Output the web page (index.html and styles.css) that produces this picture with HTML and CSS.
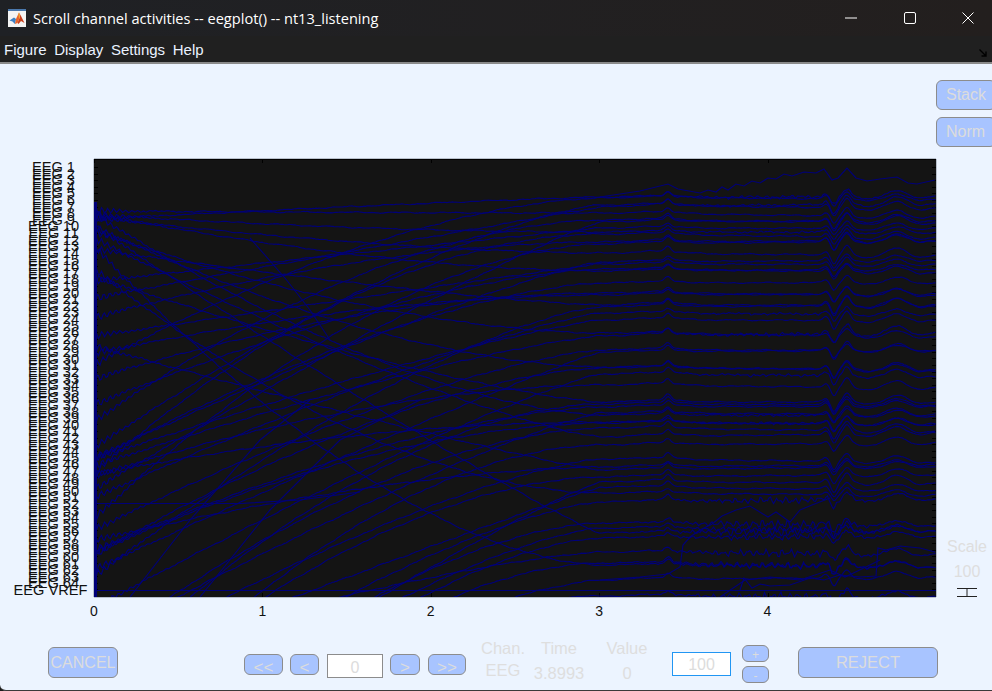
FILE: index.html
```html
<!DOCTYPE html>
<html lang="en">
<head>
    <meta charset="UTF-8">
    <title>Scroll channel activities -- eegplot() -- nt13_listening</title>
    <link rel="stylesheet" href="styles.css">
</head>
<body>
    <div class="window">
        <div class="titlebar">
            <svg class="app-icon" viewBox="0 0 18 18">
                <rect width="18" height="18" fill="#f4f4f4"/>
                <rect width="18" height="2" fill="#4a78ad"/>
                <path d="M1.5 11.5L6 8.5L8 10L7 15L4.5 12.5Z" fill="#3b7fc4"/>
                <path d="M8 10L11 3.5L12 8L9.5 14L7 15Z" fill="#e8642a"/>
                <path d="M11 3.5L13 7L16.5 14L13 12L10.5 15L9.5 14L12 8Z" fill="#c8401e"/>
                <path d="M10.5 4.5L11 3.5L12 8L11 9.5Z" fill="#f2b632"/>
            </svg>
            <span class="title">Scroll channel activities -- eegplot() -- nt13_listening</span>
            <div class="win-controls">
                <svg viewBox="0 0 12 12"><path d="M0 6H12" stroke="#fff" fill="none"/></svg>
                <svg viewBox="0 0 12 12"><rect x="0.5" y="0.5" width="11" height="11" rx="1.5" stroke="#fff" fill="none"/></svg>
                <svg viewBox="0 0 12 12"><path d="M0.5 0.5L11.5 11.5M11.5 0.5L0.5 11.5" stroke="#fff" fill="none"/></svg>
            </div>
        </div>
        <div class="menubar">
            <span>Figure</span>
            <span>Display</span>
            <span>Settings</span>
            <span>Help</span>
            <svg class="dock-arrow" viewBox="0 0 8 8"><path d="M0.5 0.5L6.5 6.5M7 2.5V7H2.5" stroke="#000" stroke-width="1.4" fill="none"/></svg>
        </div>
        <div class="figure">
            <div class="side-buttons">
                <button class="btn side-btn">Stack</button>
                <button class="btn side-btn">Norm</button>
            </div>
            <div class="plot-row">
                <div class="channels" id="channels"></div>
                <div class="plot">
                    <svg id="traces" width="842" height="438" viewBox="94 159 842 438"></svg>
                </div>
                <div class="scale">
                    <span>Scale</span>
                    <span>100</span>
                    <svg class="scale-bar" viewBox="0 0 20 9"><path d="M0 0.5H20M0 8.5H20M10 0.5V8.5" stroke="#222" fill="none"/></svg>
                </div>
            </div>
            <div class="ticks">
                <span>0</span>
                <span>1</span>
                <span>2</span>
                <span>3</span>
                <span>4</span>
            </div>
            <div class="controls">
                <button class="btn cancel">CANCEL</button>
                <div class="nav">
                    <button class="btn nav-btn prev-fast">&lt;&lt;</button>
                    <button class="btn nav-btn prev-one">&lt;</button>
                    <div class="field pos-field">0</div>
                    <button class="btn nav-btn next-one">&gt;</button>
                    <button class="btn nav-btn next-fast">&gt;&gt;</button>
                </div>
                <div class="readout">
                    <div class="read-col chan"><span>Chan.</span><span>EEG</span></div>
                    <div class="read-col time"><span>Time</span><span class="low">3.8993</span></div>
                    <div class="read-col value"><span>Value</span><span class="low">0</span></div>
                </div>
                <div class="field scale-field">100</div>
                <div class="stepper">
                    <button class="btn step-btn">+</button>
                    <button class="btn step-btn">-</button>
                </div>
                <button class="btn reject">REJECT</button>
            </div>
        </div>
    </div>
    <script src="script.js"></script>
</body>
</html>
```

FILE: styles.css
```css
body {
    margin: 0;
    background: #1c1c1c;
    font-family: "Liberation Sans", Arial, sans-serif;
}
.window {
    width: 992px;
    height: 691px;
    overflow: hidden;
    display: flex;
    flex-direction: column;
    background: #ecf4ff;
    border-bottom: 1px solid #3a3a3a;
    border-bottom-left-radius: 6px;
    box-sizing: border-box;
}
.titlebar {
    height: 36px;
    flex: none;
    display: flex;
    align-items: center;
    background: linear-gradient(90deg, #1f2125, #231f1e);
    color: #fff;
}
.app-icon {
    width: 18px;
    height: 18px;
    margin-left: 8px;
}
.title {
    margin-left: 7px;
    font-family: "Open Sans", sans-serif;
    font-size: 14.6px;
}
.win-controls {
    margin-left: auto;
    display: flex;
    gap: 46.5px;
    margin-right: 18px;
}
.win-controls svg {
    width: 12px;
    height: 12px;
}
.menubar {
    height: 26px;
    flex: none;
    display: flex;
    align-items: center;
    gap: 7.6px;
    padding: 0 5px 0 4px;
    background: #202020;
    color: #eaf2ff;
    font-size: 15px;
    border-bottom: 2px solid #8a8a8a;
}
.dock-arrow {
    width: 8px;
    height: 8px;
    margin: 8px 0 0 auto;
}
.figure {
    flex: 1;
    display: flex;
    flex-direction: column;
}
.btn {
    padding: 0;
    background: #a8c4ff;
    border: 1px solid #8c8c8c;
    border-radius: 6px;
    color: #dcdcdc;
    font-family: inherit;
    font-size: 16px;
    box-sizing: border-box;
}
.side-buttons {
    display: flex;
    flex-direction: column;
    gap: 7px;
    padding: 16px 0 0 936px;
}
.side-btn {
    width: 60px;
    height: 30px;
    text-align: left;
    padding-left: 9px;
}
.plot-row {
    display: flex;
    margin-top: 12px;
    height: 438px;
}
.channels {
    width: 94px;
    flex: none;
    color: #111;
    font-size: 14.6px;
    padding-top: 5px;
    box-sizing: border-box;
}
.channels div {
    height: 6.62px;
    line-height: 6.62px;
    width: 107px;
    text-align: center;
    white-space: nowrap;
}
.channels .vref {
    width: 101px;
}
.plot {
    width: 842px;
    flex: none;
    background: #141414;
    box-shadow: 0 -1px 0 #b8c0cc, 1px 0 0 #b8c0cc, -1px 0 0 #b8c0cc, 0 1px 0 #b8c0cc;
}
#traces {
    display: block;
}
.scale {
    flex: 1;
    display: flex;
    flex-direction: column;
    align-items: center;
    justify-content: flex-end;
    color: #dedede;
    font-size: 16px;
    padding-left: 6px;
}
.scale span {
    line-height: 25px;
}
.scale-bar {
    width: 20px;
    height: 9px;
    margin-top: 4px;
    flex: none;
}
.ticks {
    display: flex;
    padding: 6px 0 0 94px;
    height: 16px;
    color: #111;
    font-size: 14px;
    line-height: 16px;
}
.ticks span {
    width: 168.4px;
    flex: none;
    margin-left: -4px;
    margin-right: 4px;
}
.controls {
    display: flex;
    align-items: flex-start;
    padding: 0 0 0 48px;
    margin-top: 28px;
}
.cancel {
    width: 70px;
    height: 31px;
}
.nav {
    display: flex;
    align-items: flex-start;
    gap: 7px;
    margin: 7px 0 0 126px;
}
.nav-btn {
    height: 21px;
    font-size: 17px;
    line-height: 21px;
    padding-top: 2px;
}
.prev-fast {
    width: 39px;
}
.prev-one {
    width: 29px;
    margin-right: 1px;
}
.next-one {
    width: 30px;
    margin-right: 1px;
}
.next-fast {
    width: 38px;
}
.field {
    background: #fff;
    border: 1px solid #8c8c8c;
    box-sizing: border-box;
    color: #dcdcdc;
    font-size: 16px;
    text-align: center;
}
.pos-field {
    width: 56px;
    height: 24px;
    line-height: 25px;
}
.readout {
    display: flex;
    color: #dedede;
    font-size: 16.5px;
    margin-left: 15px;
}
.read-col {
    display: flex;
    flex-direction: column;
    align-items: center;
    text-align: center;
    line-height: 22px;
    margin-top: -10px;
}
.read-col .low {
    margin-top: 3px;
}
.chan {
    width: 44px;
}
.time {
    width: 60px;
    margin-left: 4px;
}
.value {
    width: 60px;
    margin-left: 8px;
}
.scale-field {
    width: 59px;
    height: 24px;
    line-height: 24px;
    margin: 5px 0 0 15px;
    border-color: #2196f3;
}
.stepper {
    display: flex;
    flex-direction: column;
    gap: 4px;
    margin: -2px 0 0 11px;
}
.step-btn {
    width: 27px;
    height: 17px;
    font-size: 12px;
    line-height: 15px;
    padding-top: 2px;
}
.reject {
    width: 140px;
    height: 31px;
    margin-left: 29px;
    font-size: 16.5px;
}
```

FILE: script.js
```js
// channel labels
var labelBox = document.getElementById('channels');
for (var n = 1; n <= 65; n++) {
    var lab = document.createElement('div');
    lab.textContent = n === 65 ? 'EEG VREF' : 'EEG ' + n;
    if (n === 65) lab.className = 'vref';
    labelBox.appendChild(lab);
}

// seeded random so the picture is the same on each load
var seed = 1337;
function rnd() {
    seed = (seed + 0x6D2B79F5) | 0;
    var t = Math.imul(seed ^ (seed >>> 15), 1 | seed);
    t = (t + Math.imul(t ^ (t >>> 7), 61 | t)) ^ t;
    return ((t ^ (t >>> 14)) >>> 0) / 4294967296;
}

function bump(x, c, w) {
    return Math.exp(-Math.pow((x - c) / w, 2));
}

// shape shared by all channels, in px, negative is up
function common(x) {
    return -4.5 * bump(x, 668, 4)
        - 2 * bump(x, 660, 30)
        - 3 * bump(x, 826, 4)
        + 8 * bump(x, 834, 4)
        - 8 * bump(x, 847, 5)
        + 2 * bump(x, 868, 10)
        - 6 * bump(x, 897, 12)
        + 1.5 * bump(x, 920, 8);
}

// level of each channel at x = 600
var levels = [197, 198, 205, 207, 213, 220, 222, 228, 232, 234, 242, 244, 253, 262, 264, 269, 271,
    283, 293, 295, 305, 307, 313, 320, 333, 336, 350, 352, 367, 368, 374, 385, 402, 404, 407,
    413, 415, 422, 423, 428, 437, 445, 459, 467, 470, 477, 482, 487, 493, 502, 523, 528, 533,
    538, 552, 563, 565, 580, 596];

var svg = document.getElementById('traces');
function addPath(d, width) {
    var p = document.createElementNS('http://www.w3.org/2000/svg', 'path');
    p.setAttribute('d', d);
    p.setAttribute('fill', 'none');
    p.setAttribute('stroke', '#000078');
    p.setAttribute('stroke-width', width || '1.15');
    svg.appendChild(p);
}

function addTick(x1, y1, x2, y2) {
    var p = document.createElementNS('http://www.w3.org/2000/svg', 'path');
    p.setAttribute('d', 'M' + x1 + ' ' + y1 + 'L' + x2 + ' ' + y2);
    p.setAttribute('stroke', '#000');
    svg.appendChild(p);
}

// axis ticks
for (var c = 0; c < 65; c++) {
    var ty = Math.round(167 + c * 6.6) + 0.5;
    addTick(94, ty, 98, ty);
    addTick(932, ty, 936, ty);
}
for (var k = 0; k < 5; k++) {
    var tx = Math.round(94 + k * 168.4) + 0.5;
    addTick(tx, 159, tx, 163);
    addTick(tx, 593, tx, 597);
}
addTick(94, 159.5, 936, 159.5);

levels.forEach(function (level, i) {
    var start;
    if (i === 0) start = 219;
    else if (i % 4 === 0) start = 210 + rnd() * (level - 210) * 0.55;
    else start = level + 50 + rnd() * 260;
    start = Math.max(start, 208);

    var power = 1 + rnd() * 0.9;
    var amp = (level < 500 ? 0.85 : 0.65) + rnd() * 0.4;
    var drift = -4 + rnd() * 8;
    var phase = rnd() * 6.28;
    var noisy = 0;
    if (level > 495) noisy = rnd() < 0.7 ? 2 + rnd() * 2 : 0;
    else if (rnd() < 0.2) noisy = 0.7 + rnd();
    var d = '';
    for (var x = 94; x <= 936; x += 1.5) {
        var t = Math.min((x - 94) / 506, 1);
        var y = level + (start - level) * Math.pow(1 - t, power);
        if (x > 600) y += drift * (x - 600) / 336;
        y += amp * common(x);
        y += 4 * Math.sin((x - 94) * 1.05 + phase) * Math.exp(-(x - 94) / 28);
        y += 0.4 * Math.sin(x * 0.13 + phase) + 0.3 * Math.sin(x * 0.37 + phase * 1.7) + (rnd() - 0.5) * 0.4;
        if (noisy) {
            y += noisy * bump(x, 780, 90) * (0.7 * Math.sin(x * 0.75 + phase) + 0.5 * Math.sin(x * 1.23 + phase * 2) + (rnd() - 0.5) * 0.6);
        }
        d += (d ? 'L' : 'M') + x + ' ' + y.toFixed(1);
    }
    addPath(d);
});

// channels that stand out from the rest
addPath('M600 197L640 191L668 184L678 189L700 193L708 190L716 192L722 187L728 190L736 184L744 186L752 181L760 183L768 178L776 179L784 174L792 176L804 172L816 173L824 169L832 180L838 178L847 168L856 178L867 181L880 179L897 177L908 183L917 184L935 180');
addPath('M600 580L640 577L668 574L680 567L683 545L690 537L700 530L712 524L722 516L736 510L750 506L768 517L776 512L790 522L800 510L812 505L830 498');
addPath('M740 590L744 578L752 588L760 584L770 586L790 585L810 578L824 580L840 575L860 577L876 576L878 548L886 550L900 546L920 548L935 552');
addPath('M720 597L745 580L770 577L800 580L830 570L845 577L870 565L880 560');
addPath('M94 503.5H240L300 500L360 492');
addPath('M94 590.5H936');
addPath('M250 238L285 278L310 310L330 340');
addPath('M130 597L190 520L260 440L310 400');
addPath('M200 597L270 510L340 440L420 400');
addPath('M95.5 202V597', '3');
```
